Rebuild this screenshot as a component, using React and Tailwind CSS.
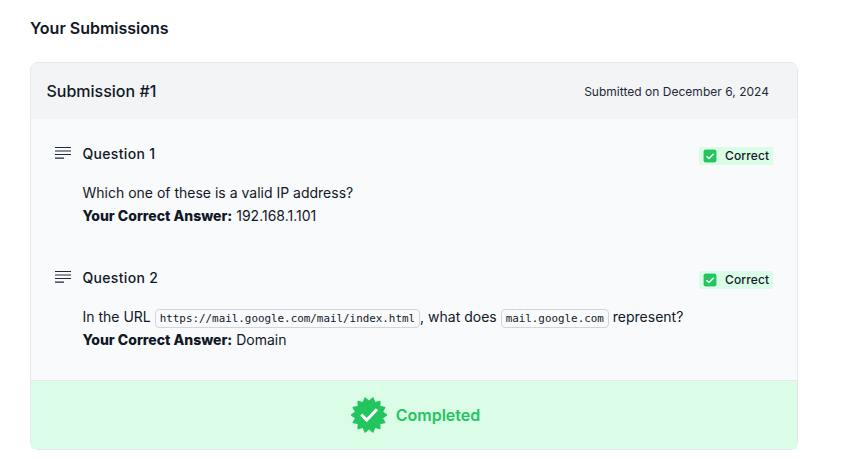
import React from "react";

function LinesIcon() {
  return (
    <svg className="mt-[2px] h-4 w-4 shrink-0" viewBox="0 0 16 16" fill="none" stroke="#1f2937" strokeWidth="1.2">
      <path d="M0 1.5H16M0 5H16M0 8.5H16M0 12.2H9" />
    </svg>
  );
}

function CorrectTag() {
  return (
    <span className="mt-1 flex h-[18px] w-[74px] items-center bg-green-100 pl-1 text-[12px] leading-[18px] font-medium tracking-[0.12px] text-[#111827]">
      <svg className="mr-2 h-[14px] w-[14px] shrink-0" viewBox="0 0 14 14" fill="none">
        <rect width="14" height="14" rx="2" fill="#fff" />
        <rect x="0.5" y="0.5" width="13" height="13" rx="2" fill="#22c55e" />
        <path d="M3.5 7.2 6 9.5 10.7 4.7" stroke="#fff" strokeWidth="1.5" />
      </svg>
      Correct
    </span>
  );
}

function Code({ children }) {
  return (
    <code className="rounded-[4px] border border-gray-300 px-1 py-[2px] font-['DejaVu_Sans_Mono',monospace] text-[10.88px] leading-none">
      {children}
    </code>
  );
}

const TIPS = 14;
const badgePoints = Array.from({ length: TIPS * 2 }, (_, i) => {
  const r = i % 2 === 0 ? 17.3 : 13.4;
  const a = ((i + 1) * Math.PI) / TIPS - Math.PI / 2;
  return `${(18 + r * Math.cos(a)).toFixed(2)},${(18 + r * Math.sin(a)).toFixed(2)}`;
}).join(" ");

function CompletedBadge() {
  return (
    <svg className="h-9 w-9 shrink-0" viewBox="0 0 36 36" fill="none">
      <polygon points={badgePoints} fill="#22c55e" stroke="#22c55e" strokeWidth="1.6" strokeLinejoin="round" />
      <path d="M10.3 17.6 15.7 23 26 12.2" stroke="#fff" strokeWidth="3" />
    </svg>
  );
}

function Question({ title, children, answer }) {
  return (
    <div className="h-[124px] pt-6 pr-6 pl-6">
      <div className="flex h-[22px] items-start justify-between">
        <div className="flex pt-[1px]">
          <LinesIcon />
          <h3 className="ml-[11.5px] text-[14px] leading-[20px] font-medium tracking-[0.32px]">{title}</h3>
        </div>
        <CorrectTag />
      </div>
      <div className="mt-4 pl-[27.5px] text-[14px] leading-[23px]">
        <p>{children}</p>
        <p><strong className="font-extrabold">Your Correct Answer:</strong> {answer}</p>
      </div>
    </div>
  );
}

export default function App() {
  return (
    <main className="h-[463px] bg-white pt-[16px] pl-[30px] font-['Inter',sans-serif] text-[#111827]">
      <h1 className="text-[16px] leading-[24px] font-semibold">Your Submissions</h1>
      <section className="mt-[22px] h-[388px] w-[768px] rounded-lg border border-gray-200 bg-gray-50">
        <header className="flex h-[56px] items-center justify-between rounded-t-lg bg-gray-100 pr-7 pl-[15.5px]">
          <h2 className="text-[16px] font-medium">Submission #1</h2>
          <span className="pt-[2px] text-[12px] tracking-[0.02px] text-gray-800">Submitted on December 6, 2024</span>
        </header>
        <div className="h-[261px]">
          <Question title="Question 1" answer="192.168.1.101">Which one of these is a valid IP address?</Question>
          <Question title="Question 2" answer="Domain">
            In the URL <Code>https://mail.google.com/mail/index.html</Code>, what does <Code>mail.google.com</Code> represent?
          </Question>
        </div>
        <footer className="flex h-[69px] items-center justify-center gap-[9px] border-t border-gray-200 bg-green-100 pl-[3px]">
          <CompletedBadge />
          <span className="text-[16px] font-semibold text-[#22c55e]">Completed</span>
        </footer>
      </section>
    </main>
  );
}
